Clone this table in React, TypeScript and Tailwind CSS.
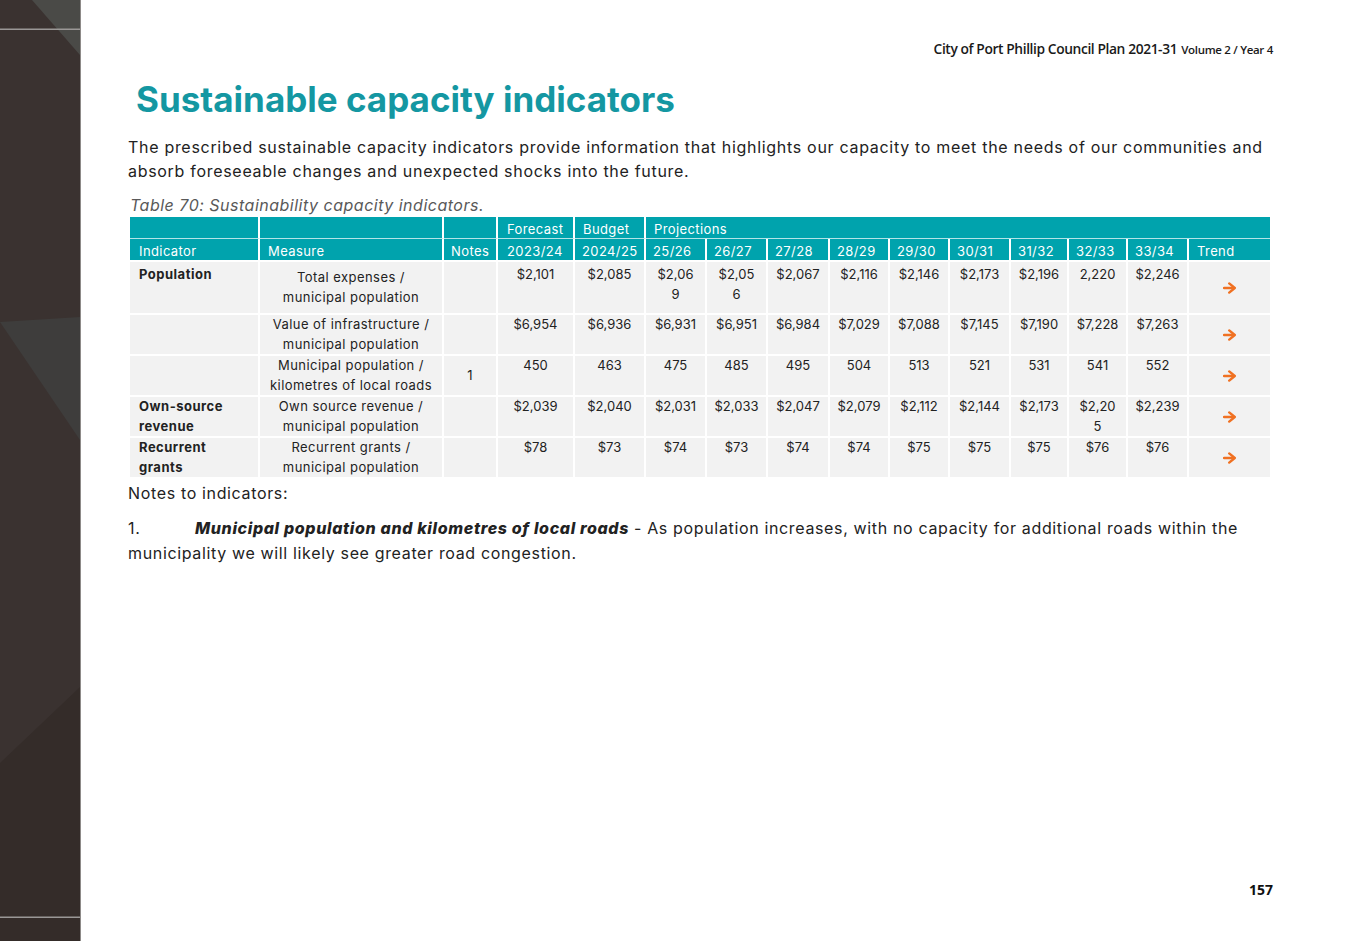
import React from 'react';

const body = '"Inter", "Noto Sans", sans-serif';

type Row = {
  indicator: string;
  measure: string[];
  notes: string;
  values: string[];
  first?: boolean;
};

const rows: Row[] = [
  {
    indicator: 'Population',
    measure: ['Total expenses /', 'municipal population'],
    notes: '',
    values: ['$2,101', '$2,085', '$2,06\n9', '$2,05\n6', '$2,067', '$2,116', '$2,146', '$2,173', '$2,196', '2,220', '$2,246'],
    first: true,
  },
  {
    indicator: '',
    measure: ['Value of infrastructure /', 'municipal population'],
    notes: '',
    values: ['$6,954', '$6,936', '$6,931', '$6,951', '$6,984', '$7,029', '$7,088', '$7,145', '$7,190', '$7,228', '$7,263'],
  },
  {
    indicator: '',
    measure: ['Municipal population /', 'kilometres of local roads'],
    notes: '1',
    values: ['450', '463', '475', '485', '495', '504', '513', '521', '531', '541', '552'],
  },
  {
    indicator: 'Own-source\nrevenue',
    measure: ['Own source revenue /', 'municipal population'],
    notes: '',
    values: ['$2,039', '$2,040', '$2,031', '$2,033', '$2,047', '$2,079', '$2,112', '$2,144', '$2,173', '$2,20\n5', '$2,239'],
  },
  {
    indicator: 'Recurrent\ngrants',
    measure: ['Recurrent grants /', 'municipal population'],
    notes: '',
    values: ['$78', '$73', '$74', '$73', '$74', '$74', '$75', '$75', '$75', '$76', '$76'],
  },
];

const widths = [130, 184, 54, 77, 71, 61, 61, 62, 60, 60, 61, 58, 59, 61, 81];
const years = ['25/26', '26/27', '27/28', '28/29', '29/30', '30/31', '31/32', '32/33', '33/34'];

// heavy orange trend arrow
const TrendArrow = () => (
  <svg width="13" height="12" viewBox="0 0 13 12" className="mx-auto">
    <path d="M1 6h8" stroke="#f07122" strokeWidth="2.4" strokeLinecap="round" />
    <path d="M6.2 1.4 11.8 6 6.2 10.6" fill="none" stroke="#f07122" strokeWidth="2.4" strokeLinecap="round" strokeLinejoin="round" />
  </svg>
);

const Sidebar = () => (
  <div className="w-[81px] shrink-0 border-r border-[#8d8a88] bg-[#3a3230]">
    <svg width="80" height="941" viewBox="0 0 80 941" className="block">
      <rect width="80" height="941" fill="#3a3230" />
      <polygon points="32,0 80,0 80,55" fill="#4a4a47" />
      <polygon points="0,322 80,317 80,440" fill="#3e3d3c" />
      <polygon points="0,763 80,687 80,941 0,941" fill="#342c29" />
      <rect x="0" y="28.5" width="80" height="1.5" fill="#9a9796" />
      <rect x="0" y="916.5" width="80" height="1.5" fill="#9a9796" />
    </svg>
  </div>
);

const th = 'border-white px-[7px] pt-[2px] text-left font-normal leading-[16px]';

export default function App() {
  return (
    <div className="flex min-h-[941px] w-[1347px] bg-white" style={{ fontFamily: body }}>
      <Sidebar />
      <main className="flex flex-1 flex-col pl-[47px] pr-[74px]">
        <div className="pt-[38px] text-right leading-[20px] text-[#1a1a1a]" style={{ fontFamily: '"Open Sans", sans-serif' }}>
          <span className="text-[13.8px] font-semibold tracking-[-0.4px]">City of Port Phillip Council Plan 2021-31</span>
          <span className="ml-1 text-[11.5px] font-semibold tracking-[-0.3px]">Volume 2 / Year 4</span>
        </div>

        <h1 className="ml-2 mt-[17px] text-[35px] font-bold leading-[44px] text-[#1497a2]">
          Sustainable capacity indicators
        </h1>

        <p className="mt-[14px] text-[16px] leading-[24px] tracking-[0.7px] text-[#222]">
          The prescribed sustainable capacity indicators provide information that highlights our capacity to meet the needs of our communities and absorb foreseeable changes and unexpected shocks into the future.
        </p>

        <p className="mt-[11px] ml-[2px] text-[16px] italic leading-[22px] tracking-[0.5px] text-[#595959]">
          Table 70: Sustainability capacity indicators.
        </p>

        <table className="mt-[1px] ml-[2px] w-[1140px] table-fixed border-separate border-spacing-0 text-[13px] text-[#222]">
          <colgroup>
            {widths.map((w, i) => (
              <col key={i} style={{ width: w }} />
            ))}
          </colgroup>
          <thead className="text-white tracking-[0.4px]">
            <tr className="h-[22px] bg-[#00a3ad]">
              <th className={`${th} border-r-2 border-b border-b-white/70`} />
              <th className={`${th} border-r-2 border-b border-b-white/70`} />
              <th className={`${th} border-r-2 border-b border-b-white/70`} />
              <th className={`${th} border-r-2 border-b border-b-white/70 pl-[9px]`}>Forecast</th>
              <th className={`${th} border-r-2 border-b border-b-white/70 pl-[8px]`}>Budget</th>
              <th colSpan={10} className={`${th} border-b border-b-white/70 pl-[8px]`}>Projections</th>
            </tr>
            <tr className="h-[23px] bg-[#00a3ad]">
              <th className={`${th} border-r-2 border-b-2 pl-[9px]`}>Indicator</th>
              <th className={`${th} border-r-2 border-b-2 pl-[8px]`}>Measure</th>
              <th className={`${th} border-r-2 border-b-2`}>Notes</th>
              <th className={`${th} border-r-2 border-b-2 pl-[9px]`}>2023/24</th>
              <th className={`${th} border-r-2 border-b-2`}>2024/25</th>
              {years.map((y) => (
                <th key={y} className={`${th} border-r-2 border-b-2`}>{y}</th>
              ))}
              <th className={`${th} border-b-2 pl-[8px]`}>Trend</th>
            </tr>
          </thead>
          <tbody>
            {rows.map((r, i) => (
              <tr key={i} className={r.first ? 'h-[53px]' : 'h-[41px]'}>
                <td className={`border-r-2 border-b-2 border-white bg-[#f2f2f2] px-[9px] align-top font-bold leading-[19.5px] tracking-[0.5px] whitespace-pre-line ${r.first ? 'pt-[3px]' : ''}`}>
                  {r.indicator}
                </td>
                <td className="border-r-2 border-b-2 border-white bg-[#f2f2f2] px-1 text-center align-middle leading-[19.5px] tracking-[0.45px]">
                  {r.measure.map((m) => (
                    <div key={m}>{m}</div>
                  ))}
                </td>
                <td className="border-r-2 border-b-2 border-white bg-[#f2f2f2] text-center align-middle">{r.notes}</td>
                {r.values.map((v, j) => (
                  <td
                    key={j}
                    className={`border-r-2 border-b-2 border-white bg-[#f2f2f2] text-center align-top leading-[19.5px] whitespace-pre-line ${r.first ? 'pt-[3px]' : ''}`}
                  >
                    {v}
                  </td>
                ))}
                <td className="border-b-2 border-white bg-[#f2f2f2] text-center align-middle">
                  <TrendArrow />
                </td>
              </tr>
            ))}
          </tbody>
        </table>

        <p className="mt-[2px] text-[16px] leading-[24px] tracking-[0.65px] text-[#222]">Notes to indicators:</p>

        <div className="mt-[11px] text-[16px] leading-[25px] tracking-[0.65px] text-[#222]">
          <div className="flex whitespace-nowrap">
            <span className="w-[67px]">1.</span>
            <span className="font-extrabold italic">Municipal population and kilometres of local roads</span>
            <span className="ml-[5px]">- As population increases, with no capacity for additional roads within the</span>
          </div>
          <div>municipality we will likely see greater road congestion.</div>
        </div>

        <div className="mt-auto pb-[41px] text-right text-[14px] font-bold text-[#111]" style={{ fontFamily: '"Open Sans", sans-serif' }}>
          157
        </div>
      </main>
    </div>
  );
}
